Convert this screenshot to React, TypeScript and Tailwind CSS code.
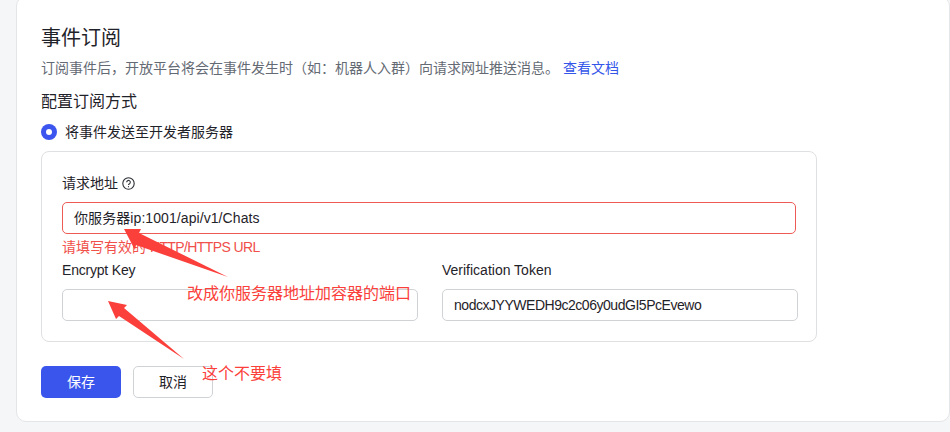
const font = { fontFamily: '"Liberation Sans", "Noto Sans CJK SC", sans-serif' };

const Annotations: React.FC = () => (
  <>
    <svg className="absolute left-0 top-0" width="950" height="432" viewBox="0 0 950 432">
      <polygon points="124,229 141,229 139,233 228,277 136,245 135,250" fill="#fb3f3b" />
      <polygon points="108,301 127,305 124,308 184,359 119,316 116,319" fill="#fb3f3b" />
    </svg>
    <span className="absolute left-[187px] top-[283px] text-[16px] leading-[22px] text-[#fb3f3b]">改成你服务器地址加容器的端口</span>
    <span className="absolute left-[202px] top-[363px] text-[16px] leading-[22px] text-[#fb3f3b]">这个不要填</span>
  </>
);

const App: React.FC = () => {
  return (
    <div className="relative h-[432px] w-[950px] overflow-hidden bg-[#f5f6f7]" style={font}>
      <div className="ml-4 mt-[-4px] h-[426px] rounded-[10px] border border-[#e4e5e7] bg-white pl-6 pt-[27px]">
        <h1 className="text-[20px] leading-7 text-[#1f2329]">事件订阅</h1>
        <p className="mt-[6px] text-[14px] leading-5 text-[#646a73]">
          订阅事件后，开放平台将会在事件发生时（如：机器人入群）向请求网址推送消息。
          <a className="ml-[4px] text-[#3355e8]">查看文档</a>
        </p>
        <h2 className="mt-[13px] text-[16px] leading-[22px] text-[#1f2329]">配置订阅方式</h2>
        <div className="mt-[8px] flex h-[22px] items-center gap-2">
          <span className="flex size-4 items-center justify-center rounded-full bg-[#3b55ee]">
            <span className="size-[6px] rounded-full bg-white" />
          </span>
          <span className="text-[14px] text-[#1f2329]">将事件发送至开发者服务器</span>
        </div>
        <div className="mt-[8px] h-[191px] w-[776px] rounded-[8px] border border-[#dfe0e2] pl-5 pt-[20px]">
          <div className="flex h-[22px] items-center gap-[4px] text-[14px] text-[#1f2329]">
            请求地址
            <svg width="13" height="13" viewBox="0 0 13 13" fill="none" stroke="#2b2f36" strokeWidth="1.1">
              <circle cx="6.5" cy="6.5" r="5.7" />
              <path d="M4.7 5.2a1.8 1.8 0 1 1 2.8 1.5c-.7.4-1 .7-1 1.3" />
              <circle cx="6.5" cy="9.7" r=".6" fill="#2b2f36" stroke="none" />
            </svg>
          </div>
          <div className="mt-[8px] flex h-8 w-[734px] items-center rounded-[5px] border border-[#ee5a55] pl-[11px] text-[14px] tracking-[0.08px] text-[#1f2329]">
            你服务器ip:1001/api/v1/Chats
          </div>
          <p className="mt-[3px] text-[14px] leading-5 text-[#f04f4a]">
            请填写有效的 <span className="tracking-[-0.6px]">HTTP/HTTPS URL</span>
          </p>
          <div className="mt-[3px] flex gap-6">
            <div className="w-[356px]">
              <label className="block text-[14px] leading-5 tracking-[-0.2px] text-[#1f2329]">Encrypt Key</label>
              <div className="mt-[9px] h-8 rounded-[5px] border border-[#d0d3d6]" />
            </div>
            <div className="w-[356px]">
              <label className="block text-[14px] leading-5 text-[#1f2329]">Verification Token</label>
              <div className="mt-[9px] flex h-8 items-center rounded-[5px] border border-[#d0d3d6] pl-[11px] text-[14px] tracking-[-0.47px] text-[#1f2329]">
                nodcxJYYWEDH9c2c06y0udGI5PcEvewo
              </div>
            </div>
          </div>
        </div>
        <div className="mt-[24px] flex gap-3">
          <button className="h-8 w-20 rounded-[5px] bg-[#3a55ec] text-[14px] text-white">保存</button>
          <button className="h-8 w-20 rounded-[5px] border border-[#d0d3d6] bg-white text-[14px] text-[#1f2329]">取消</button>
        </div>
      </div>
      <Annotations />
    </div>
  );
};

export default App;
